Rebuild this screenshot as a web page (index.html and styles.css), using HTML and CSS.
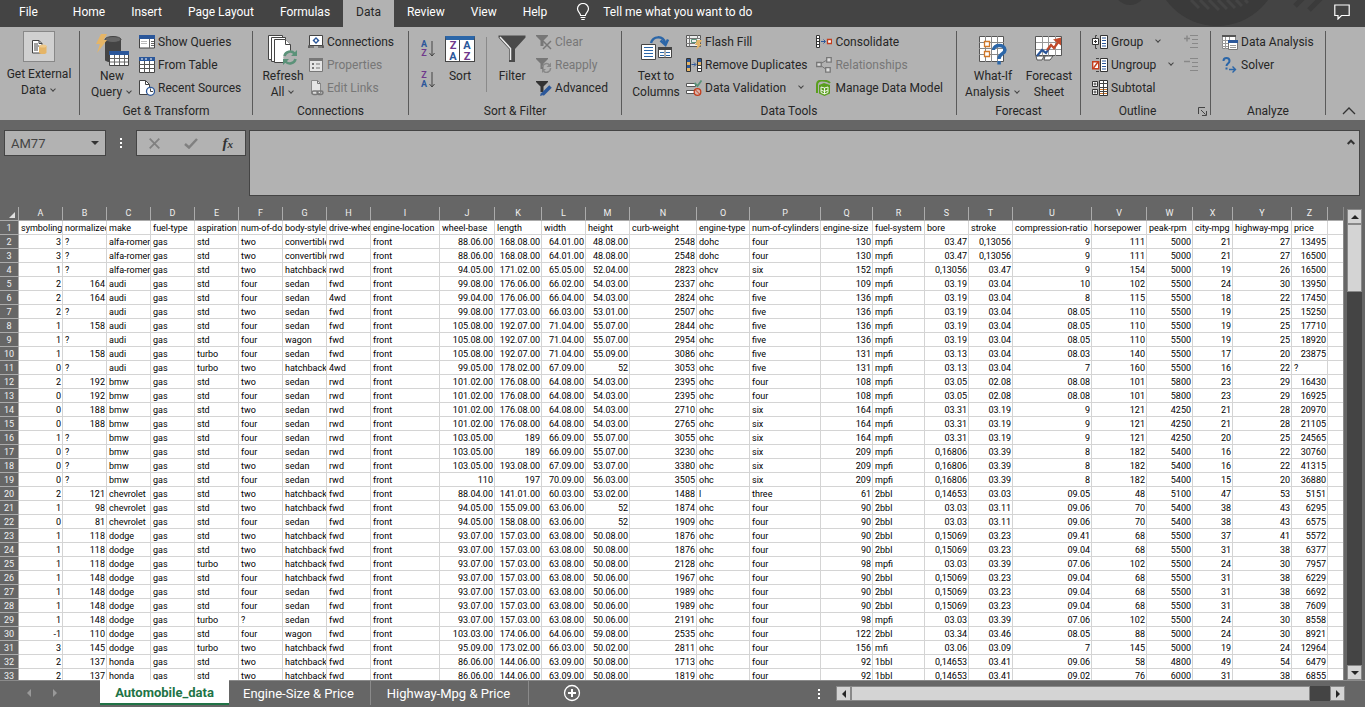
FILE: index.html
```html
<!DOCTYPE html>
<html lang="en">
<head>
    <meta charset="utf-8" />
    <title>Automobile_data</title>
    <link rel="stylesheet" href="styles.css">
</head>
<body>
    <header class="menu-bar">
        <svg class="menu-art" width="260" height="27" viewBox="0 0 260 27">
            <circle cx="25" cy="-11" r="16" fill="#3b3b3b"/>
            <circle cx="112" cy="-37" r="63" fill="#3a3a3a"/>
            <path d="M86 0l8 8M95 0l9 9M104 0l10 10M113 0l9 9M122 0l8 8M131 0l6 6M140 0l3 3" stroke="#444" stroke-width="3"/>
            <path d="M190 6l8 -8M204 10l14 -14" stroke="#3b3b3b" stroke-width="5"/>
        </svg>
        <nav class="menu-tabs">
            <button class="menu-tab menu-file">File</button>
            <button class="menu-tab">Home</button>
            <button class="menu-tab">Insert</button>
            <button class="menu-tab">Page Layout</button>
            <button class="menu-tab">Formulas</button>
            <button class="menu-tab active">Data</button>
            <button class="menu-tab">Review</button>
            <button class="menu-tab">View</button>
            <button class="menu-tab">Help</button>
        </nav>
        <button class="tell-me">
            <svg width="14" height="18" viewBox="0 0 14 18" fill="none" stroke="#fff" stroke-width="1.2"><path d="M4.6 12.5C4.6 10 1.5 9 1.5 5.800a5.500 5.300 0 0 1 11 0C12.500 9 9.400 10 9.400 12.500zM4.600 14.500h4.800M5.300 16.500h3.400"/></svg>
            <span>Tell me what you want to do</span>
        </button>
        <button class="comment-button" aria-label="Comments">
            <svg width="16" height="16" viewBox="0 0 16 16" fill="none" stroke="#fff" stroke-width="1.200"><path d="M.8 1h14.400v10.500H7.500L4 15v-3.500H.8z"/></svg>
        </button>
    </header>

    <div class="ribbon">
        <section class="group g-external">
            <div class="group-body">
                <button class="big">
                    <span class="framed">
                        <svg width="16" height="16" viewBox="0 0 16 16"><path d="M1.500 1.500h6.500l3 3v9.500H1.500z" fill="#fff" stroke="#444"/><path d="M8 1.500v3h3" fill="none" stroke="#444"/><path d="M3 5h4M3 7h5M3 9h4M3 11h4" stroke="#444"/><path d="M8 7v6.500c0 2 7.500 2 7.500 0V7z" fill="#e5b567"/><ellipse cx="11.750" cy="7" rx="3.700" ry="1.500" fill="#efc98a"/></svg>
                    </span>
                    <span>Get External<br>Data <i class="chev"></i></span>
                </button>
            </div>
        </section>
        <div class="divider"></div>

        <section class="group g-transform">
            <div class="group-body">
                <button class="big">
                    <svg width="34" height="32" viewBox="0 0 34 32"><path d="M10 5v21c0 3 16 3 16 0V5z" fill="#444"/><ellipse cx="18" cy="5.500" rx="8" ry="3" fill="#666" stroke="#444"/><path d="M6 0h6L8.500 6H12L2 19l3-9H1z" fill="#e5b567"/><path d="M14.500 17.500h19v14h-19z" fill="#fff" stroke="#444"/><path d="M14 17h20v4H14z" fill="#2b579a"/><path d="M19.500 21v10M24.500 21v10M29.500 21v10M15 24.500h18M15 28h18" stroke="#666"/></svg>
                    <span>New<br>Query <i class="chev"></i></span>
                </button>
                <div class="list">
                    <button class="small"><svg width="16" height="16" viewBox="0 0 16 16"><path d="M.5 1.500h15v12.500H.5z" fill="#fff" stroke="#444"/><path d="M0 1h16v4H0z" fill="#2b579a"/><path d="M10.500 5v9M12 7.500h3M12 9.500h3M12 11.500h3" stroke="#666"/><path d="M2 7.500h6M2 9.500h6" stroke="#bbb"/></svg>Show Queries</button>
                    <button class="small"><svg width="16" height="16" viewBox="0 0 16 16"><path d="M.5.5h15v15H.5z" fill="#fff" stroke="#444"/><path d="M0 0h16v4H0z" fill="#2b579a"/><path d="M2 2h2M6 2h2M11 2h2" stroke="#fff"/><path d="M5.500 4v12M10.500 4v12M0 7.500h16M0 11.500h16" stroke="#555"/></svg>From Table</button>
                    <button class="small"><svg width="16" height="16" viewBox="0 0 16 16"><path d="M.5.500h6l4 4v10H.5z" fill="#fff" stroke="#444"/><path d="M6.500.5v4h4" fill="none" stroke="#444"/><circle cx="11.500" cy="11.300" r="4" fill="#fff" stroke="#2b579a" stroke-width="1.300"/><path d="M11.500 8.500v3h2.500" fill="none" stroke="#444"/></svg>Recent Sources</button>
                </div>
            </div>
            <div class="group-label">Get &amp; Transform</div>
        </section>
        <div class="divider"></div>

        <section class="group g-connections">
            <div class="group-body">
                <button class="big">
                    <svg width="30" height="32" viewBox="0 0 30 32"><g fill="#fff" stroke="#444"><path d="M.5 1.500h14v24H.5z"/><path d="M3.500 3.500h14v24h-14z"/><path d="M6.500 5.500h11l5 5v18h-16z"/><path d="M17.500 5.500v5h5"/></g><circle cx="22" cy="23.500" r="6.800" fill="#b2b2b2"/><path d="M16.500 22a5.800 5.800 0 0 1 10-2.500M27.500 25a5.800 5.800 0 0 1-10 2.500" fill="none" stroke="#5b9279" stroke-width="2.600"/><path d="M29 16v6h-6zM15 31v-6h6z" fill="#5b9279"/></svg>
                    <span>Refresh<br>All <i class="chev"></i></span>
                </button>
                <div class="list">
                    <button class="small"><svg width="16" height="16" viewBox="0 0 16 16"><path d="M1.500 1.500h13v10h-13z" fill="#fff" stroke="#444"/><path d="M0 13h6M10 13h6M1 11v3M15 11v3" stroke="#444"/><path d="M8 3l3.500 3.500L8 10 4.500 6.500z" fill="#2b579a"/><circle cx="8" cy="6.500" r="1.200" fill="#fff"/></svg>Connections</button>
                    <button class="small" disabled><svg width="16" height="16" viewBox="0 0 16 16"><path d="M1.500 1.500h13v13h-13z" fill="#e4e4e4" stroke="#777"/><path d="M1 1h14v3H1z" fill="#777"/><path d="M4 6h2v2H4zM4 10h2v2H4zM8 6.500h4v1H8zM8 10.500h4v1H8z" fill="#777"/></svg>Properties</button>
                    <button class="small" disabled><svg width="16" height="16" viewBox="0 0 16 16"><path d="M3.500.5h6l3 3v10h-9z" fill="#e4e4e4" stroke="#888"/><path d="M9.500.5v3h3" fill="none" stroke="#777"/><rect x="4" y="11" width="6" height="3.500" rx="1.700" fill="#ddd" stroke="#777" stroke-width="1.500"/><rect x="9" y="11" width="6" height="3.500" rx="1.700" fill="none" stroke="#777" stroke-width="1.500"/></svg>Edit Links</button>
                </div>
            </div>
            <div class="group-label">Connections</div>
        </section>
        <div class="divider"></div>

        <section class="group g-sort">
            <div class="group-body">
                <div class="az-list">
                    <button class="az" aria-label="Sort A to Z"><span class="az-letters"><b class="blue">A</b><b class="purple">Z</b></span><svg width="6" height="16" viewBox="0 0 6 16" fill="none" stroke="#444"><path d="M3 0v15M.5 12L3 15l2.500-3"/></svg></button>
                    <button class="az" aria-label="Sort Z to A"><span class="az-letters"><b class="purple">Z</b><b class="blue">A</b></span><svg width="6" height="16" viewBox="0 0 6 16" fill="none" stroke="#444"><path d="M3 0v15M.5 12L3 15l2.500-3"/></svg></button>
                </div>
                <button class="big sort">
                    <span class="sort-icon"><b class="purple">Z</b><b class="blue">A</b><b class="blue">A</b><b class="purple">Z</b></span>
                    <span>Sort</span>
                </button>
                <div class="thin-divider"></div>
                <button class="big filter">
                    <svg width="28" height="32" viewBox="0 0 28 32"><path d="M.5 1.500h27v2L17 15v13h-6V15L.5 3.500z" fill="#4a4a4a"/><path d="M2 3l10.500 11.500V26" fill="none" stroke="#eee" stroke-width="1.500"/></svg>
                    <span>Filter</span>
                </button>
                <div class="list">
                    <button class="small" disabled><svg width="16" height="16" viewBox="0 0 16 16"><path d="M0 1h12v1L7.500 6.500V12h-3V6.500L0 2z" fill="#777"/><path d="M7 7l8 8M15 7l-8 8" stroke="#777" stroke-width="1.500"/></svg>Clear</button>
                    <button class="small" disabled><svg width="16" height="16" viewBox="0 0 16 16"><path d="M0 1h12v1L7.500 6.500V12h-3V6.500L0 2z" fill="#777"/><path d="M6.500 10a4 4 0 0 1 7-2M14.500 11a4 4 0 0 1-7 3" fill="none" stroke="#888" stroke-width="1.500"/><path d="M15 5.500V10h-4.500zM6 16v-4h4z" fill="#888"/></svg>Reapply</button>
                    <button class="small"><svg width="16" height="16" viewBox="0 0 16 16"><path d="M0 1h12v1L7.500 6.500V12h-3V6.500L0 2z" fill="#333"/><path d="M6.500 14.500l8-8" stroke="#2b579a" stroke-width="3.500"/><path d="M4 16l1-3.500L7.500 15z" fill="#2b579a"/></svg>Advanced</button>
                </div>
            </div>
            <div class="group-label">Sort &amp; Filter</div>
        </section>
        <div class="divider"></div>

        <section class="group g-tools">
            <div class="group-body">
                <button class="big">
                    <svg width="32" height="32" viewBox="0 0 32 32"><path d="M11 9C13 2 23 1 25 9" fill="none" stroke="#2b66a8" stroke-width="2.500"/><path d="M20.500 6.500L25.500 11l2.500-5.500" fill="none" stroke="#2b66a8" stroke-width="2.500"/><path d="M1.500 10.500h14v15h-14z" fill="#fff" stroke="#444"/><path d="M4 13.500h9M4 16.500h9M4 19.500h9M4 22.500h9" stroke="#2b66a8"/><path d="M18.500 13.500h13v10h-13z" fill="#fff" stroke="#444"/><path d="M18 13h14v3H18z" fill="#444"/><path d="M20 18.500h4M26 18.500h4M20 21.500h4M26 21.500h4" stroke="#2b66a8"/><path d="M25 16v8" stroke="#666"/></svg>
                    <span>Text to<br>Columns</span>
                </button>
                <div class="list">
                    <button class="small"><svg width="16" height="16" viewBox="0 0 16 16"><path d="M.5 1.500h14v11H.5z" fill="#eee" stroke="#555"/><path d="M3.500 1.500v11M0 4.500h15M0 9.500h9M11.500 1v3" stroke="#777"/><path d="M5.500 5.500h5v3h-5z" fill="none" stroke="#5b9279"/><path d="M11 6h5l-2.500 4H16l-6 6 1.500-5H9z" fill="#e5b567"/></svg>Flash Fill</button>
                    <button class="small"><svg width="16" height="16" viewBox="0 0 16 16"><path d="M.5 1.500h4v13h-4zM11.500 1.500h4v13h-4z" fill="#fff" stroke="#333"/><path d="M1 2h3v3H1zM1 8h3v3H1zM12 2h3v3h-3z" fill="#2b579a"/><path d="M1 5h3v3H1zM1 11h3v3H1zM12 5h3v3h-3z" fill="#e5b567"/><path d="M12 8.500h3M12 11.500h3" stroke="#444"/><path d="M5.500 7.500h4M8 5.500l2 2-2 2" fill="none" stroke="#2b579a"/></svg>Remove Duplicates</button>
                    <button class="small"><svg width="16" height="16" viewBox="0 0 16 16"><path d="M.5 3.500h9v3h-9zM.5 10.500h9v3h-9z" fill="#fff" stroke="#555"/><path d="M8.500 3l3 3L15.500.5" fill="none" stroke="#5b9279" stroke-width="1.800"/><circle cx="11.500" cy="12" r="3.300" fill="#d8b5ac" stroke="#c43e1c" stroke-width="1.300"/><path d="M9.300 9.800l4.400 4.400" stroke="#c43e1c"/></svg>Data Validation<i class="chev far"></i></button>
                </div>
                <div class="list second">
                    <button class="small"><svg width="16" height="16" viewBox="0 0 16 16"><path d="M.5 1.500h3v12h-3zM.5 4.500h3M.5 7.500h3M.5 10.500h3" fill="#fff" stroke="#333"/><path d="M5 7.500h4M7.500 5.500l2 2-2 2" fill="none" stroke="#2b579a"/><path d="M11.500 5.500h4v4h-4z" fill="#fff" stroke="#c43e1c" stroke-width="1.300"/></svg>Consolidate</button>
                    <button class="small" disabled><svg width="16" height="16" viewBox="0 0 16 16"><path d="M4 7l7-4M4 8l7 5" stroke="#777"/><path d="M.7 5.500h4.500v4H.7zM10.700.7h4.500v4.500h-4.500zM9.700 10.700h4.500v4.500H9.700z" fill="#ddd" stroke="#777" stroke-width="1.300"/></svg>Relationships</button>
                    <button class="small"><svg width="16" height="16" viewBox="0 0 16 16"><path d="M1 13V5c0-3 2-4.500 5-4.500 3.500 0 6 0 8 2.500" fill="none" stroke="#5a9e1e" stroke-width="2"/><path d="M3 5l5-2 6 2v8.500L8.500 16 3 13.500z" fill="#5a9e1e"/><path d="M5 7l3.500 1L12 7M5 10l3.500 1.500L12 10M8.500 8v6M5 7v5.500l3.500 1.500 3.500-1.500V7" fill="none" stroke="#fff" stroke-width=".9"/></svg>Manage Data Model</button>
                </div>
            </div>
            <div class="group-label">Data Tools</div>
        </section>
        <div class="divider"></div>

        <section class="group g-forecast">
            <div class="group-body">
                <button class="big">
                    <svg width="30" height="32" viewBox="0 0 30 32"><path d="M1.500 2.500h24v25h-24z" fill="#fff" stroke="#555"/><path d="M7.500 2v26M13.500 2v26M19.500 2v26M1 8.500h25M1 14.500h25M1 20.500h25" stroke="#888"/><path d="M6.500 7.500h5v5h-5zM6.500 17.500h5v5h-5z" fill="#fff" stroke="#d0782a" stroke-width="1.300"/><path d="M15.500 16c0-6 11.500-6 11.500 0 0 4-6 3.500-6 9" fill="none" stroke="#2b66a8" stroke-width="3.400"/><path d="M19.300 27h3.500v3.500h-3.500z" fill="#2b66a8"/></svg>
                    <span>What-If<br>Analysis <i class="chev"></i></span>
                </button>
                <button class="big">
                    <svg width="28" height="32" viewBox="0 0 28 32"><path d="M.5 2.500h26v19H.5z" fill="#fff" stroke="#555"/><path d="M7.500 2v20M13.500 2v20M20.500 2v20M1 8.500h25M1 15.500h25" stroke="#999"/><path d="M1 22h8l-2 4H2zM10 22h8l-3 4H9z" fill="#fff" stroke="#555"/><path d="M2 22l5-6 4 3 4-6" fill="none" stroke="#2b579a" stroke-width="2.200"/><path d="M12 16l4-5 3 3 5-7" fill="none" stroke="#c14a2b" stroke-width="2.200"/><path d="M18 5.500l8-2v8z" fill="#c14a2b"/></svg>
                    <span>Forecast<br>Sheet</span>
                </button>
            </div>
            <div class="group-label">Forecast</div>
        </section>
        <div class="divider"></div>

        <section class="group g-outline">
            <div class="group-body">
                <div class="list">
                    <button class="small"><svg width="16" height="16" viewBox="0 0 16 16"><path d="M5 1.500H3.500V5M5 14.500H3.500V11" fill="none" stroke="#444"/><path d="M.5 4.500h6v6h-6zM8.500 1.500h7v13h-7z" fill="#fff" stroke="#333"/><path d="M2 7.500h3M3.500 6v3" stroke="#333"/><path d="M10 4h4M10 6.500h4M10 9.500h4M10 12h4" stroke="#2b579a"/></svg>Group<i class="chev far"></i></button>
                    <button class="small"><svg width="16" height="16" viewBox="0 0 16 16"><path d="M8.500 1.500h7v13h-7z" fill="#fff" stroke="#333"/><path d="M4 1.500h3M4 14.500h3" stroke="#444"/><path d="M10 4h4M10 6.500h4M10 9.500h4M10 12h4" stroke="#2b579a"/><path d="M.7 4.700h6v7h-6z" fill="#fff" stroke="#c43e1c" stroke-width="1.400"/><path d="M1.500 11l4.500-6" stroke="#c43e1c" stroke-width="1.400"/></svg>Ungroup<i class="chev far"></i></button>
                    <button class="small"><svg width="16" height="16" viewBox="0 0 16 16"><path d="M.5 1.500h5v5h-5zM.5 9.500h5v5h-5zM7.500.5h8v15h-8z" fill="#fff" stroke="#333"/><path d="M1.500 4h3M3 2.500v3M1.500 12h3M3 10.500v3M11.500.5v15M7 3.500h9M7 7.500h9M7 11.500h9" stroke="#444"/><path d="M8 9.500h3M12 9.500h3M8 13.500h3M12 13.500h3" stroke="#d0782a"/></svg>Subtotal</button>
                </div>
                <div class="detail-list">
                    <button class="small" disabled aria-label="Show Detail"><svg width="15" height="16" viewBox="0 0 15 16" stroke="#888"><path d="M6 1.500h8M8 5.500h6M8 9.500h6M6 13.500h8" stroke="#888"/><path d="M0 4.500h6M3 1.500v6" stroke-width="1.500"/></svg></button>
                    <button class="small" disabled aria-label="Hide Detail"><svg width="15" height="16" viewBox="0 0 15 16" stroke="#888"><path d="M6 1.500h8M8 5.500h6M8 9.500h6M6 13.500h8" stroke="#888"/><path d="M0 4.500h6" stroke-width="1.500"/></svg></button>
                </div>
            </div>
            <div class="group-label">Outline
                <button class="launcher" aria-label="Outline settings"><svg width="9" height="9" viewBox="0 0 9 9" fill="none" stroke="#444"><path d="M.5 7V.5H7M3 3l4.500 4.500M8.500 4v4.500H4"/></svg></button>
            </div>
        </section>
        <div class="divider"></div>

        <section class="group g-analyze">
            <div class="group-body">
                <div class="list">
                    <button class="small"><svg width="16" height="16" viewBox="0 0 16 16"><path d="M.5 1.500h13v13H.5z" fill="#fff" stroke="#888"/><path d="M0 1h14v2H0z" fill="#555"/><path d="M3.500 3v12M7.500 3v12M0 6.500h14M0 9.500h14M0 12.500h14" stroke="#999"/><path d="M6.500 6.500h9v9h-9z" fill="#fff" stroke="#777"/><path d="M6 6h10v3H6z" fill="#2b579a"/><path d="M8 11.500h6M8 13.500h6" stroke="#999"/></svg>Data Analysis</button>
                    <button class="small"><svg width="16" height="16" viewBox="0 0 16 16" fill="none" stroke="#2b66a8"><path d="M1.500 4c0-4 6-4 6 0 0 2.500-3 2.500-3 5" stroke-width="2"/><path d="M4.500 10.500v2" stroke-width="2"/><path d="M7 12.500h6M10.500 9.500l3 3-3 3" stroke-width="1.400"/></svg>Solver</button>
                </div>
            </div>
            <div class="group-label">Analyze</div>
        </section>
        <div class="divider"></div>
        <button class="collapse" aria-label="Collapse the ribbon"><svg width="14" height="8" viewBox="0 0 14 8" fill="none" stroke="#333" stroke-width="1.300"><path d="M1 7l6-6 6 6"/></svg></button>
    </div>

    <div class="formula-row">
        <div class="name-box">
            <input class="name-input" type="text" value="AM77" aria-label="Name box">
            <i class="tri-down"></i>
        </div>
        <span class="dots"><i></i><i></i><i></i></span>
        <div class="fx-buttons">
            <button aria-label="Cancel"><svg width="11" height="11" viewBox="0 0 11 11" stroke="#808080" stroke-width="1.800"><path d="M.7.7l9.600 9.600M10.300.7L.7 10.300"/></svg></button>
            <button aria-label="Enter"><svg width="14" height="11" viewBox="0 0 14 11" fill="none" stroke="#808080" stroke-width="2.500"><path d="M1 6l4 3.500L13 1"/></svg></button>
            <button class="fx" aria-label="Insert function">f<small>x</small></button>
        </div>
        <div class="formula-box">
            <textarea class="formula-input" aria-label="Formula bar"></textarea>
            <button class="formula-collapse" aria-label="Collapse formula bar"><svg width="8" height="6" viewBox="0 0 8 6" fill="none" stroke="#333" stroke-width="2"><path d="M.7 5L4 1.700 7.300 5"/></svg></button>
        </div>
    </div>

    <main class="sheet">
        <div class="grid-wrap">
            <table class="grid">
                <colgroup id="cols"></colgroup>
                <thead><tr id="letters"><th class="corner"><i></i></th></tr></thead>
                <tbody id="rows"></tbody>
            </table>
        </div>
        <div class="v-scroll">
            <button aria-label="Scroll up"><i class="tri up"></i></button>
            <div class="v-thumb"></div>
            <div class="v-track"></div>
            <button aria-label="Scroll down"><i class="tri down"></i></button>
        </div>
    </main>

    <footer class="sheet-bar">
        <div class="sheet-nav">
            <button aria-label="Previous sheet"><i class="tri left"></i></button>
            <button aria-label="Next sheet"><i class="tri right"></i></button>
        </div>
        <button class="sheet-tab active">Automobile_data</button>
        <button class="sheet-tab">Engine-Size &amp; Price</button>
        <button class="sheet-tab lined">Highway-Mpg &amp; Price</button>
        <button class="add-sheet" aria-label="New sheet"><svg width="18" height="18" viewBox="0 0 18 18" fill="none" stroke="#fff"><circle cx="9" cy="9" r="7.500" stroke-width="1.300"/><path d="M9 5v8M5 9h8" stroke-width="2"/></svg></button>
        <span class="dots"><i></i><i></i><i></i></span>
        <div class="h-scroll">
            <button aria-label="Scroll left"><i class="tri left"></i></button>
            <div class="h-thumb"></div>
            <div class="h-track"></div>
            <button aria-label="Scroll right"><i class="tri right"></i></button>
        </div>
    </footer>
    <script src="sheet.js"></script>
</body>
</html>
```
FILE: styles.css
```css
* {
    box-sizing: border-box;
}

body {
    margin: 0;
    height: 100vh;
    display: flex;
    flex-direction: column;
    overflow: hidden;
    background-color: #666666;
    font-family: Roboto, "Open Sans", sans-serif;
    font-size: 12px;
    color: #262626;
}

button {
    margin: 0;
    padding: 0;
    border: 0;
    background: none;
    font: inherit;
    color: inherit;
    white-space: nowrap;
}

svg {
    display: block;
    flex: none;
}

/* menu */
.menu-bar {
    position: relative;
    display: flex;
    height: 27px;
    flex: none;
    background-color: #444444;
    color: #FFFFFF;
}

.menu-art {
    position: absolute;
    right: 0;
    top: 0;
}

.menu-tabs {
    display: flex;
}

.menu-tab {
    padding: 0 13px 3px;
}

.menu-file {
    padding: 0 22px 3px 19px;
}

.menu-tab.active {
    background-color: #B2B2B2;
    color: #262626;
}

.tell-me {
    display: flex;
    align-items: center;
    gap: 13px;
    margin-left: 16px;
    padding-bottom: 3px;
}

.comment-button {
    position: relative;
    margin-left: auto;
    padding: 0 15px 4px 0;
}

/* ribbon */
.ribbon {
    display: flex;
    align-items: flex-start;
    flex: none;
    height: 93px;
    padding-top: 4px;
    background-color: #B2B2B2;
}

.divider {
    flex: none;
    width: 1px;
    height: 84px;
    background-color: #5A5A5A;
}

.group {
    flex: none;
}

.group-body {
    display: flex;
    height: 72px;
}

.group-label {
    position: relative;
    line-height: 16px;
    text-align: center;
}

.g-external { width: 79px; }
.g-transform { width: 172px; }
.g-connections { width: 155px; }
.g-sort { width: 212px; }
.g-tools { width: 334px; }
.g-forecast { width: 123px; }
.g-outline { width: 129px; }
.g-analyze { width: 114px; }

.big {
    display: flex;
    flex-direction: column;
    align-items: center;
    flex: none;
    gap: 2px;
    padding-top: 3px;
    line-height: 16px;
}

.g-external .big {
    width: 78px;
    padding-top: 0;
    gap: 4px;
}

.g-transform .big {
    width: 46px;
    margin: 0 4px 0 9px;
}

.g-connections .big {
    width: 46px;
    margin: 0 2px 0 7px;
}

.g-tools .big {
    width: 58px;
    margin: 0 1px 0 5px;
}

.g-forecast .big {
    width: 58px;
}

.g-forecast .big:first-child {
    width: 54px;
    margin-left: 9px;
}

.sort {
    width: 44px;
}

.filter {
    width: 50px;
}

.framed {
    width: 32px;
    height: 31px;
    display: flex;
    align-items: center;
    justify-content: center;
    background-color: #D0D0D0;
    border: 1px solid #888888;
}

.chev {
    display: inline-block;
    width: 4px;
    height: 4px;
    margin: 0 2px 3px;
    border-right: 1px solid #444444;
    border-bottom: 1px solid #444444;
    transform: rotate(45deg);
}

.chev.far {
    margin-left: 10px;
}

.small {
    display: flex;
    align-items: center;
    gap: 3px;
    height: 23px;
    padding-bottom: 2px;
}

.small:disabled {
    color: #777777;
}

.list.second {
    margin-left: 9px;
}

.g-outline .list,
.g-analyze .list {
    margin-left: 11px;
}

.detail-list {
    margin-left: auto;
    padding-right: 11px;
}

.az-list {
    display: flex;
    flex-direction: column;
    gap: 13px;
    padding: 9px 3px 0 12px;
}

.az {
    display: flex;
    align-items: center;
    gap: 2px;
    height: 18px;
}

.az-letters {
    display: flex;
    flex-direction: column;
    font-size: 9px;
    line-height: 9px;
}

.blue { color: #2B579A; }
.purple { color: #70388C; }

.sort-icon {
    display: grid;
    grid-template-columns: 14px 14px;
    width: 30px;
    height: 26px;
    margin: 2px 0 4px;
    border: 1px solid #444444;
    border-top: 4px solid #2B66A8;
    background: linear-gradient(90deg, #FFFFFF 13px, #444444 13px, #444444 14px, #FFFFFF 14px);
    font-size: 11px;
    line-height: 11px;
    text-align: center;
}

.thin-divider {
    width: 1px;
    height: 55px;
    margin: 6px 0 0 4px;
    background-color: #8A8A8A;
}

.thin-divider + .filter {
    margin-right: -1px;
}

.launcher {
    position: absolute;
    right: 3px;
    top: 4px;
}

.group-label:has(.launcher) {
    padding-right: 16px;
}

.collapse {
    align-self: flex-end;
    margin: 0 9px 5px auto;
}

/* name box and formula bar */
.formula-row {
    display: flex;
    align-items: flex-start;
    flex: none;
    padding: 10px 5px 11px 4px;
}

.name-box {
    display: flex;
    align-items: center;
    width: 102px;
    height: 26px;
    padding-right: 6px;
    background-color: #B2B2B2;
    border: 1px solid #444444;
}

.name-input {
    flex: 1;
    min-width: 0;
    padding: 0 6px;
    border: 0;
    background: none;
    font: inherit;
    font-size: 13px;
    color: #444444;
}

.tri-down {
    border: 4px solid transparent;
    border-top-color: #333333;
    border-bottom: 0;
}

.dots {
    display: flex;
    flex-direction: column;
    gap: 2px;
}

.dots i {
    width: 2px;
    height: 2px;
    background-color: #FFFFFF;
}

.formula-row .dots {
    margin: 8px 14px;
}

.fx-buttons {
    display: flex;
    justify-content: space-around;
    align-items: center;
    width: 110px;
    height: 26px;
    margin-right: 3px;
    background-color: #B2B2B2;
    border: 1px solid #444444;
}

.fx {
    font-family: "Liberation Serif", serif;
    font-style: italic;
    font-weight: bold;
    font-size: 15px;
    color: #333333;
}

.fx small {
    font-size: 11px;
}

.formula-box {
    display: flex;
    align-items: flex-start;
    flex: 1;
    height: 66px;
    background-color: #B2B2B2;
    border: 1px solid #444444;
}

.formula-input {
    flex: 1;
    height: 64px;
    border: 0;
    background: none;
    resize: none;
}

.formula-collapse {
    padding: 8px 4px;
}

/* sheet */
.sheet {
    display: flex;
    flex: 1;
    min-height: 0;
}

.grid-wrap {
    flex: 1;
    min-width: 0;
    overflow: hidden;
    border-right: 1px solid #8A8A8A;
}

.grid {
    width: 100%;
    table-layout: fixed;
    border-collapse: separate;
    border-spacing: 0;
    font-size: 9px;
    line-height: 12px;
    color: #000000;
}

.grid th,
.grid td {
    height: 14px;
    padding: 1px 1px 0 2px;
    overflow: hidden;
    white-space: nowrap;
    border-right: 1px solid #D4D4D4;
    border-bottom: 1px solid #D4D4D4;
}

.grid td {
    background-color: #FFFFFF;
}

.grid .num {
    text-align: right;
}

.grid th {
    padding: 1px 0 0;
    background-color: #666666;
    border-color: #ABABAB;
    color: #F0F0F0;
    font-weight: normal;
    text-align: center;
}

.grid thead th {
    padding: 0 0 1px;
}

.grid th:last-child,
.grid td:last-child {
    border-right: 0;
}

.grid tbody th:first-child {
    border-right: 1px solid #ABABAB;
}

.corner i {
    display: block;
    margin: 3px 3px 0 auto;
    width: 0;
    border-left: 6px solid transparent;
    border-bottom: 6px solid #E0E0E0;
}

.v-scroll {
    display: flex;
    flex-direction: column;
    flex: none;
    width: 15px;
    margin: 2px 3px 0;
}

.v-scroll button,
.h-scroll button {
    display: flex;
    align-items: center;
    justify-content: center;
    flex: none;
    width: 15px;
    height: 15px;
    background-color: #D4D4D4;
    border: 1px solid #888888;
}

.v-thumb {
    height: 68px;
    background-color: #D4D4D4;
    border: 1px solid #888888;
}

.v-track {
    flex: 1;
    background-color: #444444;
}

.tri {
    border: 4px solid transparent;
}

.tri.up { border-bottom-color: #262626; border-top: 0; }
.tri.down { border-top-color: #262626; border-bottom: 0; }
.tri.left { border-right-color: #262626; border-left: 0; }
.tri.right { border-left-color: #262626; border-right: 0; }

/* sheet tabs */
.sheet-bar {
    display: flex;
    align-items: flex-start;
    flex: none;
    height: 27px;
    padding-right: 20px;
    border-top: 1px solid #8A8A8A;
    font-size: 13px;
    color: #FFFFFF;
}

.sheet-nav {
    display: flex;
    gap: 22px;
    width: 100px;
    padding: 8px 0 0 27px;
}

.sheet-nav .tri {
    display: block;
}

.sheet-nav .tri.left { border-right-color: #999999; }
.sheet-nav .tri.right { border-left-color: #999999; }

.sheet-tab {
    height: 24px;
    padding: 0 16px 0 14px;
}

.sheet-tab.active {
    width: 129px;
    height: 25px;
    margin-top: -1px;
    padding: 2px 0 0;
    background-color: #FFFFFF;
    border-bottom: 2px solid #217346;
    color: #217346;
    font-weight: bold;
}

.sheet-tab.lined {
    padding: 0 18px 0 16px;
    border-left: 1px solid #8A8A8A;
    border-right: 1px solid #8A8A8A;
}

.add-sheet {
    margin: 3px 0 0 34px;
}

.sheet-bar .dots {
    margin: 8px 16px 0 auto;
}

.h-scroll {
    display: flex;
    width: 509px;
    margin-top: 5px;
}

.h-thumb {
    flex: 1;
    background-color: #D4D4D4;
    border: 1px solid #888888;
}

.h-track {
    width: 20px;
    background-color: #444444;
}
```
FILE: sheet.js
```js
var widths = [19, 44, 44, 44, 44, 44, 44, 44, 44, 69, 55, 47, 44, 44, 67, 53, 71, 52, 52, 44, 44, 79, 55, 46, 40, 59, 36];

var data = `symboling|normalized-losses|make|fuel-type|aspiration|num-of-doors|body-style|drive-wheels|engine-location|wheel-base|length|width|height|curb-weight|engine-type|num-of-cylinders|engine-size|fuel-system|bore|stroke|compression-ratio|horsepower|peak-rpm|city-mpg|highway-mpg|price
3|?|alfa-romero|gas|std|two|convertible|rwd|front|88.06.00|168.08.00|64.01.00|48.08.00|2548|dohc|four|130|mpfi|03.47|0,13056|9|111|5000|21|27|13495
3|?|alfa-romero|gas|std|two|convertible|rwd|front|88.06.00|168.08.00|64.01.00|48.08.00|2548|dohc|four|130|mpfi|03.47|0,13056|9|111|5000|21|27|16500
1|?|alfa-romero|gas|std|two|hatchback|rwd|front|94.05.00|171.02.00|65.05.00|52.04.00|2823|ohcv|six|152|mpfi|0,13056|03.47|9|154|5000|19|26|16500
2|164|audi|gas|std|four|sedan|fwd|front|99.08.00|176.06.00|66.02.00|54.03.00|2337|ohc|four|109|mpfi|03.19|03.04|10|102|5500|24|30|13950
2|164|audi|gas|std|four|sedan|4wd|front|99.04.00|176.06.00|66.04.00|54.03.00|2824|ohc|five|136|mpfi|03.19|03.04|8|115|5500|18|22|17450
2|?|audi|gas|std|two|sedan|fwd|front|99.08.00|177.03.00|66.03.00|53.01.00|2507|ohc|five|136|mpfi|03.19|03.04|08.05|110|5500|19|25|15250
1|158|audi|gas|std|four|sedan|fwd|front|105.08.00|192.07.00|71.04.00|55.07.00|2844|ohc|five|136|mpfi|03.19|03.04|08.05|110|5500|19|25|17710
1|?|audi|gas|std|four|wagon|fwd|front|105.08.00|192.07.00|71.04.00|55.07.00|2954|ohc|five|136|mpfi|03.19|03.04|08.05|110|5500|19|25|18920
1|158|audi|gas|turbo|four|sedan|fwd|front|105.08.00|192.07.00|71.04.00|55.09.00|3086|ohc|five|131|mpfi|03.13|03.04|08.03|140|5500|17|20|23875
0|?|audi|gas|turbo|two|hatchback|4wd|front|99.05.00|178.02.00|67.09.00|52|3053|ohc|five|131|mpfi|03.13|03.04|7|160|5500|16|22|?
2|192|bmw|gas|std|two|sedan|rwd|front|101.02.00|176.08.00|64.08.00|54.03.00|2395|ohc|four|108|mpfi|03.05|02.08|08.08|101|5800|23|29|16430
0|192|bmw|gas|std|four|sedan|rwd|front|101.02.00|176.08.00|64.08.00|54.03.00|2395|ohc|four|108|mpfi|03.05|02.08|08.08|101|5800|23|29|16925
0|188|bmw|gas|std|two|sedan|rwd|front|101.02.00|176.08.00|64.08.00|54.03.00|2710|ohc|six|164|mpfi|03.31|03.19|9|121|4250|21|28|20970
0|188|bmw|gas|std|four|sedan|rwd|front|101.02.00|176.08.00|64.08.00|54.03.00|2765|ohc|six|164|mpfi|03.31|03.19|9|121|4250|21|28|21105
1|?|bmw|gas|std|four|sedan|rwd|front|103.05.00|189|66.09.00|55.07.00|3055|ohc|six|164|mpfi|03.31|03.19|9|121|4250|20|25|24565
0|?|bmw|gas|std|four|sedan|rwd|front|103.05.00|189|66.09.00|55.07.00|3230|ohc|six|209|mpfi|0,16806|03.39|8|182|5400|16|22|30760
0|?|bmw|gas|std|two|sedan|rwd|front|103.05.00|193.08.00|67.09.00|53.07.00|3380|ohc|six|209|mpfi|0,16806|03.39|8|182|5400|16|22|41315
0|?|bmw|gas|std|four|sedan|rwd|front|110|197|70.09.00|56.03.00|3505|ohc|six|209|mpfi|0,16806|03.39|8|182|5400|15|20|36880
2|121|chevrolet|gas|std|two|hatchback|fwd|front|88.04.00|141.01.00|60.03.00|53.02.00|1488|l|three|61|2bbl|0,14653|03.03|09.05|48|5100|47|53|5151
1|98|chevrolet|gas|std|two|hatchback|fwd|front|94.05.00|155.09.00|63.06.00|52|1874|ohc|four|90|2bbl|03.03|03.11|09.06|70|5400|38|43|6295
0|81|chevrolet|gas|std|four|sedan|fwd|front|94.05.00|158.08.00|63.06.00|52|1909|ohc|four|90|2bbl|03.03|03.11|09.06|70|5400|38|43|6575
1|118|dodge|gas|std|two|hatchback|fwd|front|93.07.00|157.03.00|63.08.00|50.08.00|1876|ohc|four|90|2bbl|0,15069|03.23|09.41|68|5500|37|41|5572
1|118|dodge|gas|std|two|hatchback|fwd|front|93.07.00|157.03.00|63.08.00|50.08.00|1876|ohc|four|90|2bbl|0,15069|03.23|09.04|68|5500|31|38|6377
1|118|dodge|gas|turbo|two|hatchback|fwd|front|93.07.00|157.03.00|63.08.00|50.08.00|2128|ohc|four|98|mpfi|03.03|03.39|07.06|102|5500|24|30|7957
1|148|dodge|gas|std|four|hatchback|fwd|front|93.07.00|157.03.00|63.08.00|50.06.00|1967|ohc|four|90|2bbl|0,15069|03.23|09.04|68|5500|31|38|6229
1|148|dodge|gas|std|four|sedan|fwd|front|93.07.00|157.03.00|63.08.00|50.06.00|1989|ohc|four|90|2bbl|0,15069|03.23|09.04|68|5500|31|38|6692
1|148|dodge|gas|std|four|sedan|fwd|front|93.07.00|157.03.00|63.08.00|50.06.00|1989|ohc|four|90|2bbl|0,15069|03.23|09.04|68|5500|31|38|7609
1|148|dodge|gas|turbo|?|sedan|fwd|front|93.07.00|157.03.00|63.08.00|50.06.00|2191|ohc|four|98|mpfi|03.03|03.39|07.06|102|5500|24|30|8558
-1|110|dodge|gas|std|four|wagon|fwd|front|103.03.00|174.06.00|64.06.00|59.08.00|2535|ohc|four|122|2bbl|03.34|03.46|08.05|88|5000|24|30|8921
3|145|dodge|gas|turbo|two|hatchback|fwd|front|95.09.00|173.02.00|66.03.00|50.02.00|2811|ohc|four|156|mfi|03.06|03.09|7|145|5000|19|24|12964
2|137|honda|gas|std|two|hatchback|fwd|front|86.06.00|144.06.00|63.09.00|50.08.00|1713|ohc|four|92|1bbl|0,14653|03.41|09.06|58|4800|49|54|6479
2|137|honda|gas|std|two|hatchback|fwd|front|86.06.00|144.06.00|63.09.00|50.08.00|1819|ohc|four|92|1bbl|0,14653|03.41|09.02|76|6000|31|38|6855`;

var cols = document.getElementById('cols');
widths.forEach(function (w) {
    var col = document.createElement('col');
    col.style.width = w + 'px';
    cols.appendChild(col);
});
// the cut off column takes what is left
cols.appendChild(document.createElement('col'));

function addCell(row, tag, text) {
    var cell = document.createElement(tag);
    cell.textContent = text;
    if (tag === 'td' && /^-?[\d.,]+$/.test(text)) {
        cell.className = 'num';
    }
    row.appendChild(cell);
}

var letters = document.getElementById('letters');
'ABCDEFGHIJKLMNOPQRSTUVWXYZ'.split('').forEach(function (l) {
    addCell(letters, 'th', l);
});
addCell(letters, 'th', '');

var rows = document.getElementById('rows');
data.split('\n').forEach(function (line, i) {
    var row = document.createElement('tr');
    addCell(row, 'th', i + 1);
    line.split('|').forEach(function (value) {
        addCell(row, 'td', value);
    });
    addCell(row, 'td', '');
    rows.appendChild(row);
});
```
